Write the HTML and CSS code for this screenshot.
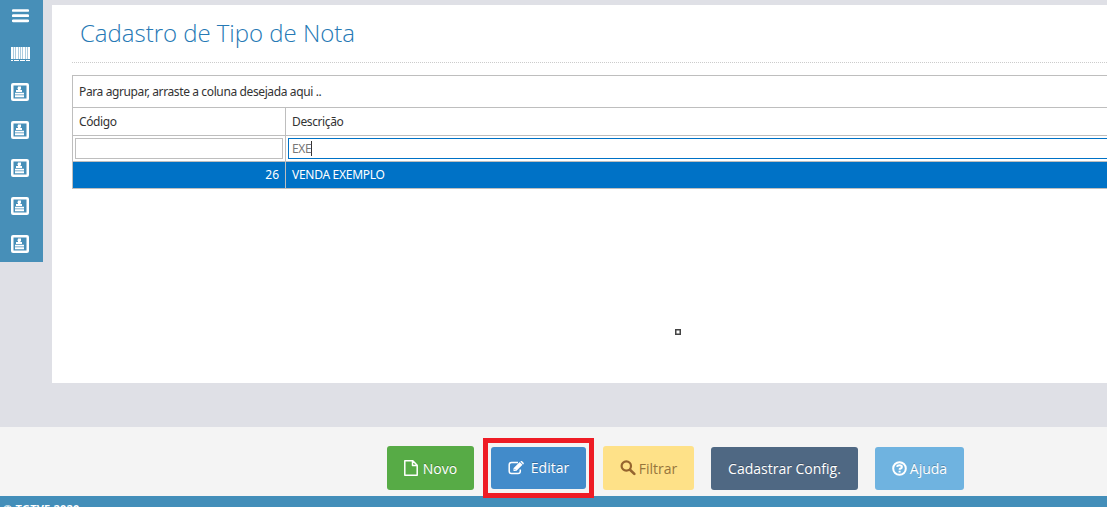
FILE: index.html
```
<!DOCTYPE html>
<html lang="pt-BR">
<head>
<meta charset="utf-8">
<title>Cadastro de Tipo de Nota</title>
<link rel="stylesheet" href="styles.css">
</head>
<body>
<svg class="defs" width="0" height="0">
  <symbol id="card" viewBox="0 0 18 18">
    <rect x="1.250" y="1.250" width="15.500" height="15.500" rx=".8" fill="none" stroke="#fff" stroke-width="2.500"/>
    <path d="M7 3.500h3v2.500H9.500v1h1.500v2H5V7h2V6H6.500V4.500H7zM4 9.700h9v1.800H4zM4 12.200h9v2H4z" fill="#fff"/>
  </symbol>
</svg>
<div class="app">
  <div class="workspace">
    <nav class="sidebar">
      <a class="nav-item"><svg width="17" height="14" viewBox="0 0 17 14"><path d="M1.200 1.500h14.600M1.200 6.700h14.600M1.200 11.800h14.600" stroke="#fff" stroke-width="2.700" stroke-linecap="round"/></svg></a>
      <a class="nav-item"><svg width="19" height="14" viewBox="0 0 19 14"><path d="M0 0h2v12H0zM3 0h1v12H3zM5 0h2v12H5zM8 0h1v12H8zM10 0h1v12h-1zM12 0h2v12h-2zM15 0h1v12h-1zM17 0h2v12h-2z" fill="#fff"/><path d="M2 0h1v12H2zM4 0h1v12H4zM7 0h1v12H7zM9 0h1v12H9zM11 0h1v12h-1zM14 0h1v12h-1zM16 0h1v12h-1z" fill="#fff" opacity=".55"/><path d="M0 13.500h2M3 13.500h5M9 13.500h5M15 13.500h4" stroke="#fff"/></svg></a>
      <a class="nav-item"><svg width="18" height="18"><use href="#card"/></svg></a>
      <a class="nav-item"><svg width="18" height="18"><use href="#card"/></svg></a>
      <a class="nav-item"><svg width="18" height="18"><use href="#card"/></svg></a>
      <a class="nav-item"><svg width="18" height="18"><use href="#card"/></svg></a>
      <a class="nav-item"><svg width="18" height="18"><use href="#card"/></svg></a>
    </nav>
    <main class="panel">
      <h1 class="title">Cadastro de Tipo de Nota</h1>
      <div class="grid">
        <div class="group-bar"><span class="group-text">Para agrupar, arraste a coluna desejada aqui ..</span></div>
        <div class="grid-row header"><div class="cell">Código</div><div class="cell">Descrição</div></div>
        <div class="grid-row filter"><div class="cell"><div class="field"></div></div><div class="cell"><div class="field focused"><span class="typed">EXE</span></div></div></div>
        <div class="grid-row selected"><div class="cell number">26</div><div class="cell"><span class="record">VENDA EXEMPLO</span></div></div>
      </div>
      <span class="handle"></span>
    </main>
  </div>
  <div class="actions">
    <button class="btn novo"><svg width="14" height="16" viewBox="0 0 14 16"><path d="M.8.800h8L13.200 5.200v10H.8zM8.500.800v4.700h4.700" fill="none" stroke="#fff" stroke-width="1.500" stroke-linejoin="round"/></svg><span>Novo</span></button>
    <button class="btn editar"><svg width="16" height="14" viewBox="0 0 16 14"><path d="M10 1.500H3.500Q1.200 1.500 1.200 3.800v6.400q0 2.300 2.300 2.300H10q2.300 0 2.300-2.300V8.500" fill="none" stroke="#fff" stroke-width="1.500"/><path d="M5.500 10V7.200l6.200-6.200 2.800 2.800L8.300 10zM12.400.500l.5-.5q.6-.3 1.200.2l1.500 1.500q.5.600 0 1.200l-.5.500z" fill="#fff"/><path d="M6.300 7.900l1.400 1.400" stroke="#428bca" stroke-width=".7"/></svg><span>Editar</span></button>
    <button class="btn filtrar"><svg width="16" height="16" viewBox="0 0 16 16"><circle cx="6.300" cy="6" r="4.700" fill="none" stroke="#95652f" stroke-width="2.200"/><path d="M10 9.700l4.300 4.200" stroke="#95652f" stroke-width="2.600" stroke-linecap="round"/></svg><span>Filtrar</span></button>
    <button class="btn config"><span>Cadastrar Config.</span></button>
    <button class="btn ajuda"><svg width="15" height="15" viewBox="0 0 15 15"><circle cx="7.500" cy="7.500" r="6.300" fill="none" stroke="#fff" stroke-width="2"/><path d="M4.900 5.700Q5.300 4.300 7.500 4.300q2.400 0 2.400 1.600 0 1-1.300 1.600-1 .4-1 1.200M7.600 9.700v1.800" fill="none" stroke="#fff" stroke-width="2"/></svg><span>Ajuda</span></button>
  </div>
  <footer class="footer">© TGTVE 2020</footer>
  <div class="highlight"></div>
</div>
</body>
</html>
```
FILE: styles.css
```
* { box-sizing: border-box; }
body { margin: 0; font-family: "Open Sans", sans-serif; }
.defs { position: absolute; }
.app { position: relative; display: flex; flex-direction: column; width: 1107px; height: 507px; overflow: hidden; background: #dfe0e6; }
.workspace { display: flex; gap: 9px; height: 427px; align-items: flex-start; }
.sidebar { width: 43px; height: 262px; flex: none; background: #478fb8; }
.nav-item { display: flex; align-items: center; justify-content: center; height: 38px; padding-right: 3px; }
.nav-item:first-child { height: 35px; padding-bottom: 4px; }
.nav-item svg { display: block; }
.panel { position: relative; flex: 1; min-width: 0; height: 378px; margin-top: 5px; padding-left: 20px; background: #fff; }
.title { margin: 0 0 12px; height: 58px; padding: 11px 0 0 8px; border-bottom: 1px dotted #ccc; font-size: 24px; line-height: 34px; font-weight: 300; color: #2679b5; white-space: nowrap; letter-spacing: -.03px; }
.grid { border: 1px solid #bebebe; border-right: 0; font-family: "Noto Sans", sans-serif; font-size: 12px; letter-spacing: -.38px; color: #333; white-space: nowrap; }
.group-bar { height: 32px; padding-left: 6px; line-height: 32px; border-bottom: 1px solid #bebebe; }
.grid-row { display: grid; grid-template-columns: 213px 1fr; }
.cell { padding: 0 6px; }
.cell:first-child { border-right: 1px solid #bebebe; }
.header { height: 28px; line-height: 28px; border-bottom: 1px solid #bebebe; }
.filter { height: 26px; border-bottom: 1px solid #bebebe; }
.filter .cell { padding: 2px; }
.filter .cell:last-child { padding-right: 0; }
.field { height: 21px; border: 1px solid #bebebe; }
.focused { border-color: #0072c6; border-right: 0; padding-left: 3px; line-height: 19px; color: #777; }
.typed { display: inline-block; height: 15px; line-height: 15px; border-right: 1px solid #333; }
.selected { height: 26px; line-height: 26px; background: #0072c6; color: #fff; }
.record { letter-spacing: -.28px; }
.number { text-align: right; letter-spacing: 0; }
.handle { position: absolute; left: 623px; top: 324px; width: 6px; height: 6px; border: 1.500px solid #444; box-shadow: inset 0 0 0 .5px #444; }
.actions { display: flex; gap: 17px; height: 69px; padding: 19px 0 0 387px; background: #f4f4f4; }
.btn { display: flex; align-items: center; justify-content: center; gap: 5px; flex: none; height: 43px; margin: 1px 0 0; padding: 0; border: 0; border-radius: 3px; font-family: "Open Sans", sans-serif; font-size: 14px; color: #fff; white-space: nowrap; text-shadow: 0 -1px 0 rgba(0,0,0,.25); }
.novo { width: 87px; height: 44px; margin-top: 0; background: #57ab46; }
.editar { width: 95px; height: 42px; gap: 7px; padding-bottom: 1px; background: #428bca; }
.filtrar { width: 91px; height: 44px; margin-top: 0; background: #fee188; color: #96753c; gap: 3px; text-shadow: none; }
.config { width: 147px; background: #4f6883; }
.ajuda { width: 89px; gap: 3px; background: #6fb3e0; }
.footer { height: 11px; overflow: hidden; padding: 5px 0 0 3px; background: #438eb9; font-size: 11px; line-height: 16px; font-weight: 700; letter-spacing: .2px; color: #fff; }
.highlight { position: absolute; left: 483px; top: 438px; width: 111px; height: 60px; border: 5px solid #ee1c25; }
```
